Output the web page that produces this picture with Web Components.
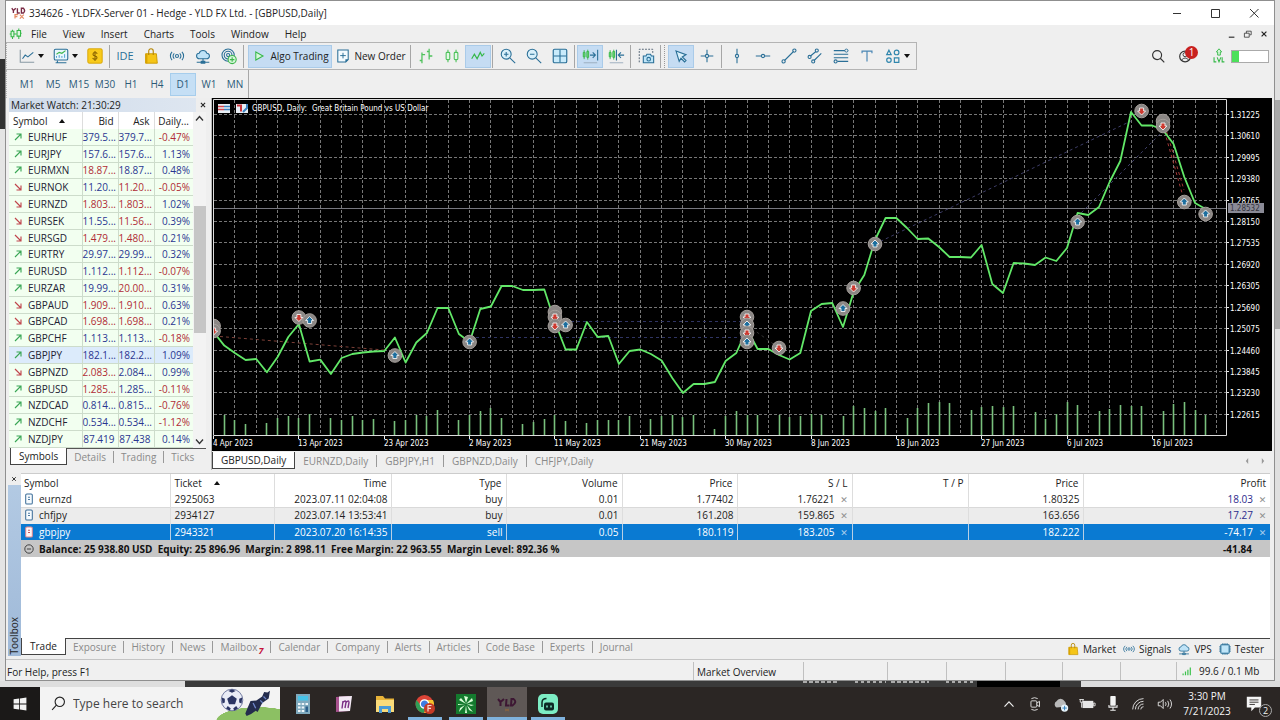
<!DOCTYPE html>
<html lang="en">
<head>
<meta charset="utf-8">
<title>334626 - YLDFX-Server 01 - Hedge - YLD FX Ltd. - [GBPUSD,Daily]</title>
<style>
html, body { margin: 0; height: 100%; }
body { font: 10px/14px "Open Sans", "Noto Sans", sans-serif; color: #222; background: #e4e4e4; }
</style>
</head>
<body>
<yld-desktop></yld-desktop>
<script>
const BASE = `*{box-sizing:border-box}
button{font:inherit;color:inherit;background:none;border:0;padding:0;margin:0;white-space:nowrap}
svg{display:block}`;

function define(name, css, html) {
  customElements.define(name, class extends HTMLElement {
    constructor() {
      super();
      this.attachShadow({ mode: 'open' });
    }
    connectedCallback() {
      const markup = typeof html === 'function' ? html(this) : html;
      this.shadowRoot.innerHTML = `<style>${BASE}${css}</style>${markup}`;
    }
  });
}

/* ---------- icons ---------- */
const B = 'stroke="#2a6f97" fill="none" stroke-width="1.2"';
const G = 'stroke="#3cb54a" fill="none" stroke-width="1.2"';
const W = 'stroke="#e8e8e8" fill="none" stroke-width="1"';
const BAG = '<path d="M4 7.5h12l1 10.5H4z" fill="#f5c518" stroke="#c99700"/><path d="M4 18V7.5h2V18z" fill="#d9a400"/><path d="M7.5 9V4.500a2.500 2.500 0 0 1 5 0V9" fill="none" stroke="#b58500" stroke-width="1.2"/>';
const CLOUD = `<path d="M6 13a3 3 0 0 1-.3-6 4.500 4.500 0 0 1 8.600 0A3 3 0 0 1 14 13z" fill="#bfe3f7" stroke="#2a6f97" stroke-width="1.2"/><path d="M10 13v3M3 17h14M8 16h4v2H8z" ${B}/>`;
const WAVES = `<circle cx="10" cy="10" r="1.700" ${B}/><path d="M7 7a4 4 0 0 0 0 6M13 7a4 4 0 0 1 0 6M4.500 5.500a6.500 6.500 0 0 0 0 9M15.500 5.500a6.500 6.500 0 0 1 0 9" ${B}/>`;
const ICONS = {
  logo: '<path d="M1 4l2 3v3M6 4L3 7M8 4v6h3M13 4h2.500q3 3 0 6H13z" fill="none" stroke="#7a2b45" stroke-width="1.700"/><path d="M5 17v-5h4M5 14.500h3M11 12l5 5M16 12l-5 5" fill="none" stroke="#e58a62" stroke-width="1.500"/>',
  candles: `<path d="M5 4v2M5 14v3M14 2v3M14 13v4M1 10h2M7 10h4M16 9h2" stroke="#35b848" stroke-width="1.500"/><path d="M3 6h4v8H3zM11.500 5h5v8h-5z" fill="#dff5e1" stroke="#35b848" stroke-width="1.500"/>`,
  line: `<path d="M2.500 3v14H18" fill="none" stroke="#8899a4" stroke-width="1.200"/><path d="M5 13l3-4 3 2 6-5" ${B}/>`,
  indicator: `<rect x="2.500" y="2.500" width="15" height="12" rx="1.500" fill="#e8f6fd" stroke="#2a6f97" stroke-width="1.200"/><path d="M5 8l3-2 3 1 4-3" ${G}/><path d="M5 12v-2M8 12V9M11 12v-2M14 12V8" stroke="#3d9ac9"/><path d="M4 17.500h12M6 15v2" ${B}/>`,
  dollar: '<rect x="2" y="2" width="16" height="16" rx="1.500" fill="#f8cb1c" stroke="#d6a300"/><path d="M12.500 7.500q-1-1.500-2.500-1.300c-3 .2-3 3.300 0 3.800s3 3.600 0 3.800q-1.700 0-2.700-1.500M10 4.500v11" fill="none" stroke="#8a6500" stroke-width="1.200"/>',
  bag: BAG, cloud: CLOUD, waves: WAVES,
  copy: `<circle cx="9" cy="9" r="6.800" ${B}/><circle cx="9" cy="9" r="4.300" ${B}/><circle cx="9" cy="9" r="1.700" ${B}/><circle cx="13.500" cy="14" r="4.500" fill="#d5f7da" stroke="#3cb54a" stroke-width="1.200"/><path d="M13.500 11.500v5M11 14h5" ${G}/>`,
  play: '<path d="M6 5l9 5-9 5z" fill="#d8f8dc" stroke="#35b848" stroke-width="1.300"/>',
  order: `<path d="M3.500 2.500h13v12l-3 3h-10z" fill="#f4fbff" stroke="#2a6f97" stroke-width="1.300"/><path d="M10 6v7M6.500 9.500h7" ${B}/><path d="M13 18l4-4h-4z" fill="#2a6f97"/>`,
  bars: '<path d="M5.500 6v12M3 15h2.500M5.500 8.500H9M13.500 2v12M11 5h2.500M13.500 10H17" fill="none" stroke="#4fc25c" stroke-width="1.400"/>',
  candle2: '<path d="M5.500 3v3M5.500 14v3M14.500 3v3M14.500 14v3" stroke="#4fc25c" stroke-width="1.200"/><rect x="3.500" y="6" width="4" height="8" rx="1" fill="#e3f8e5" stroke="#4fc25c" stroke-width="1.200"/><rect x="12.500" y="6" width="4" height="8" rx="1" fill="#e3f8e5" stroke="#4fc25c" stroke-width="1.200"/>',
  zig: '<path d="M3 13l3-5 3 5 3.500-7 2 4L17 7" fill="none" stroke="#35b848" stroke-width="1.300"/>',
  zin: `<circle cx="8" cy="8" r="5.500" fill="#d8f0fb" stroke="#2a6f97" stroke-width="1.200"/><path d="M12 12l6 6M8 5.500v5M5.500 8h5" ${B}/>`,
  zout: `<circle cx="8" cy="8" r="5.500" fill="#d8f0fb" stroke="#2a6f97" stroke-width="1.200"/><path d="M12 12l6 6M5.500 8h5" ${B}/>`,
  tile: `<rect x="2.500" y="2.500" width="15" height="15" rx="1.500" fill="#c9ebfb" stroke="#2a6f97" stroke-width="1.300"/><path d="M10 3v14M3 10h14" ${B}/>`,
  scroll: `<path d="M3.500 3.500v10M7.500 3v11" stroke="#35b848"/><path d="M2.500 6h2v5h-2zM6.500 5h2v6.500h-2z" fill="#6fd47a" stroke="#35b848"/><path d="M10 9h6M13 6l3 3-3 3M18.500 3v12" ${B}/><path d="M3 17.500h15" stroke="#9ab"/>`,
  shift: `<path d="M3.500 3.500v10M7.500 3v11" stroke="#35b848"/><path d="M2.500 6h2v5h-2zM6.500 5h2v6.500h-2z" fill="#6fd47a" stroke="#35b848"/><path d="M12.500 9H19M15.500 6l-3 3 3 3M10.500 3v12" ${B}/><path d="M3 17.500h15" stroke="#9ab"/>`,
  camera: `<path d="M2.500 17V2.500H17.500V8" stroke="#456" fill="none" stroke-dasharray="2 1.500"/><path d="M7 10h3l1-2h4l1 2h2.500v7.500H7z" fill="#bfe5f8" stroke="#2a6f97" stroke-width="1.200"/><circle cx="13" cy="13.500" r="2" ${B}/>`,
  cursor: '<path d="M4.500 4.500l11 4-4 2.500 4 4-1.500 1.500-4-4-2 3.500z" fill="#d8f0fb" stroke="#2a6f97" stroke-width="1.300"/>',
  cross: `<path d="M10 3v5M10 12v5M3 10h5M12 10h5" ${B}/><circle cx="10" cy="10" r="1.800" ${B}/>`,
  vline: `<path d="M10 2v6M10 12v6" ${B}/><circle cx="10" cy="10" r="1.800" ${B}/>`,
  hline: `<path d="M2 10h6M12 10h6" ${B}/><circle cx="10" cy="10" r="1.800" ${B}/>`,
  trend: `<path d="M5 15L15 5" ${B}/><circle cx="4" cy="16" r="1.800" ${B}/><circle cx="16" cy="4" r="1.800" ${B}/>`,
  channel: `<path d="M5 10l6-5M9 15l8-8" ${B}/><circle cx="4" cy="11" r="1.700" ${B}/><circle cx="12" cy="4" r="1.700" ${B}/><circle cx="8" cy="16" r="1.700" ${B}/>`,
  fibo: `<path d="M2 4h16M2 8h16M2 12h16M6 16h12" ${B}/><circle cx="4" cy="16" r="1.700" ${B}/><circle cx="16" cy="4" r="1.700" fill="#eee" stroke="#2a6f97"/>`,
  text: '<path d="M4.500 7V4.500h11V7M10 4.500V16" fill="none" stroke="#4a86b4" stroke-width="1.300"/>',
  shapes: '<g fill="none" stroke="#2f86ad" stroke-width="1.300"><path d="M5.500 3.500L8 8.500H3z"/><circle cx="14" cy="6" r="2.600"/><circle cx="5.500" cy="14.500" r="2.500"/><path d="M11.500 12h5v5h-5z"/></g>',
  search: '<circle cx="9" cy="9" r="5" fill="none" stroke="#333" stroke-width="1.300"/><path d="M12.500 12.500L17 17" stroke="#333" stroke-width="1.300"/>',
  user: '<circle cx="9" cy="10.500" r="6" fill="none" stroke="#333" stroke-width="1.300"/><circle cx="9" cy="8.500" r="2.300" fill="none" stroke="#333"/><path d="M5 14.500q4-4.500 8 0" fill="none" stroke="#333"/>',
  level: '<path d="M10 2l3 3.500h-1.500V9h-3V5.500H7z" fill="#d4f7d8" stroke="#35b848"/><path d="M4.500 11.500v5h2.500M8 11.500l2 5 2-5M13.500 11.500v5H16" fill="none" stroke="#35b848" stroke-width="1.200"/>',
  min: '<path d="M6 10.500h8" stroke="#333"/>',
  max: '<path d="M5.500 6.500h8v8h-8z" fill="none" stroke="#333"/>',
  close: '<path d="M5 6l8.500 8.500M13.500 6L5 14.500" stroke="#333"/>',
  smin: '<path d="M6 14h7" stroke="#333" stroke-width="1.500"/>',
  srest: '<path d="M5.500 9h6v5h-6zM8 9V6.500h6V11h-2" fill="none" stroke="#333"/>',
  sclose: '<path d="M7 7l6 6M13 7l-6 6" stroke="#222" stroke-width="1.500"/>',
  chip: `<rect x="4" y="4" width="12" height="12" rx="1" fill="#bfe5f8" stroke="#2a6f97" stroke-width="1.500"/><path d="M7 1.500v3M10 1.500v3M13 1.500v3M7 15.500v3M10 15.500v3M13 15.500v3M1.500 7h3M1.500 10h3M1.500 13h3M15.500 7h3M15.500 10h3M15.500 13h3" stroke="#2a6f97" stroke-width="1.200"/>`,
  signal: '<path d="M3.500 14v3M7.500 11v6M11.500 8v9M15.500 4v13" stroke="#3cc24c" stroke-width="2"/>',
  up: '<path d="M5 15L15 5M7.500 5H15v7.500" fill="none" stroke="#3aa655" stroke-width="1.900"/>',
  down: '<path d="M5 5l10 10M15 7.500V15H7.500" fill="none" stroke="#c0454c" stroke-width="1.900"/>',
  docb: '<rect x="4.500" y="1.500" width="11" height="17" rx="2" fill="#f6fbff" stroke="#3b6c97" stroke-width="1.700"/><path d="M8.500 7h3M8.500 11h3" stroke="#3b6c97" stroke-width="1.700"/>',
  docr: '<rect x="4.500" y="1.500" width="11" height="17" rx="2" fill="#fff6f6" stroke="#e3868b" stroke-width="1.700"/><path d="M8.500 7h3M8.500 11h3" stroke="#c04a50" stroke-width="1.700"/>',
  minus: '<circle cx="10" cy="10" r="7" fill="none" stroke="#333" stroke-width="1.500"/><path d="M6.500 10h7" stroke="#333" stroke-width="1.500"/>',
  left: '<path d="M12 5l-4 5 4 5z" fill="#999"/>',
  right: '<path d="M8 5l4 5-4 5z" fill="#999"/>',
  win: '<path d="M2 4l7-1v6.500H2zM10 3l8-1v7.500h-8zM2 10.500h7V17l-7-1zM10 10.500h8V18l-8-1z" fill="#f2f2f2"/>',
  find: '<circle cx="11.500" cy="8" r="5.500" fill="none" stroke="#222" stroke-width="1.300"/><path d="M7.500 12L2.500 17.500" stroke="#222" stroke-width="1.300"/>',
  calc: '<rect x="3" y="0" width="14" height="20" fill="#7fa9bd"/><rect x="5" y="2" width="10" height="4.500" fill="#46c3e8"/><path d="M5 9h2.500v2H5zM8.700 9h2.500v2H8.700zM5 12.500h2.500v2H5zM8.700 12.500h2.500v2H8.700zM5 16h2.500v2H5zM8.700 16h2.500v2H8.700zM12.500 9H15v2h-2.500z" fill="#eef6fa"/><path d="M12.500 12.500H15V18h-2.500z" fill="#2a5f8a"/>',
  note: '<path d="M2 3l13-1v15L2 18z" fill="#a8538f"/><path d="M5 2.500l13-.5-2 15L5 17.500z" fill="#f3e9f4"/><path d="M8 14.500L9 7M8.800 8.500q3-3 3.200 0l-1 5.500M12 8.500q3-3 3 0L14 14" fill="none" stroke="#7b2f86" stroke-width="1.400"/>',
  folder: '<path d="M1 2h7l2 2.500h9V18H1z" fill="#e8b339"/><path d="M1 6h18v12H1z" fill="#fadb7a"/><path d="M4 19v-7h12v7h-3v-4H7v4z" fill="#4a9bd6"/>',
  chrome: '<circle cx="9.500" cy="10" r="9" fill="#dc4437"/><path d="M1.500 6a9 9 0 0 0 7 13l4-7-7-1z" fill="#2f9e57"/><path d="M9.500 6H18a9 9 0 0 1-9 13l4-7z" fill="#f6c32c"/><circle cx="9.500" cy="10" r="4.200" fill="#3f7de0" stroke="#fff" stroke-width="1.200"/><circle cx="14.500" cy="14.500" r="5.500" fill="#c43a26"/><path d="M13 17.500v-6h3.500M13 14.300h3" fill="none" stroke="#f6d9d2" stroke-width="1.200"/>',
  leaf: '<path d="M0 0h20v20H0z" fill="#147a2e"/><path d="M10 9l-2-7 4 1zM10 10L3 6l2-2zM10 10l6-6 1 3zM9 11H2v-1zM11 10l7 1-3 1zM9 11l-6 7 1-4zM11 11l6 7-4-2zM10 11l1 8H9z" fill="#d9ffd9"/>',
  cam: '<rect x="0" y="0" width="20" height="20" rx="5" fill="#7dedc4"/><rect x="6" y="8.500" width="10" height="8" rx="2" fill="#0c2a25"/><path d="M4 13V8.500q0-4 4.500-4" fill="none" stroke="#0c2a25" stroke-width="1.500"/><path d="M9 11.500v2M13 11.500v2" stroke="#7dedc4" stroke-width="1.500"/>',
  yld: '<path d="M1 5l2.500 3v4M7 5L3.500 8M9.500 5L9 11.500h3.500M14.500 5h2q4 3-1 6.500h-1.500z" fill="none" stroke="#3d1733" stroke-width="2"/><path d="M8 15l4 2M12 15l-4 2" stroke="#8a6440"/>',
  chev: `<path d="M5 13l5-5.500 5 5.500" stroke="#eee" fill="none" stroke-width="1.300"/>`,
  meet: `<rect x="5.500" y="6.500" width="6.500" height="7" rx="1" ${W}/><path d="M12 9l3-2v6l-3-2M6 4q3.500-2 7 0M6 16q3.500 2 7 0" ${W}/>`,
  cloudy: '<path d="M5 14a4 4 0 0 1 0-7 5 5 0 0 1 9 0q3 3 0 6z" fill="#b9b9b9"/><circle cx="14" cy="14.500" r="4" fill="#e8f4fb"/><path d="M14 12v5M11.500 14.500h5" stroke="#2878b8"/>',
  battery: '<rect x="5" y="6.500" width="12" height="8" fill="#e6e6e6"/><path d="M17 9h2v3h-2zM1.500 5h5M2.500 5v3h3V5M4 8v6" stroke="#e6e6e6" fill="none"/>',
  mic: '<rect x="7" y="1" width="6" height="11" rx="1" fill="#f4f4f4"/><path d="M5.500 11v2.500h9V11M10 13v4M7 17h6" stroke="#eee" stroke-width="1.200" fill="none"/>',
  wifi: `<path d="M3 16A12 12 0 0 1 15 4M6 16a9 9 0 0 1 9-9M9 16a6 6 0 0 1 6-6M12 16a3 3 0 0 1 3-3" ${W}/>`,
  vol: `<path d="M2.500 8h2.500l3-3v10l-3-3H2.500zM10.500 8q1.500 2 0 4M13 6.500q2.500 3.500 0 7M15.500 5q3.500 5 0 10" ${W}/>`,
  msg: '<path d="M2 2h16v12h-7l-4 4v-4H2z" fill="#f4f4f4"/><path d="M5 5.500h10M5 8h10M5 10.500h6" stroke="#2b2725"/>',
  ball: '<circle cx="10" cy="10" r="9" fill="#e9ecf6" stroke="#5a6490" stroke-width=".7"/><path d="M10 6l4 3-1.500 4.500h-5L6 9zM10 1l3 1.500L10 4 7 2.500zM1.500 8l2.500 1v3l-2 1zM18.500 8L16 9v3l2 1zM5 17l1.500-2 2.500 2-1 2zM15 17l-1.500-2-2.500 2 1 2z" fill="#2b3563"/>',
  boot: '<path d="M1 18L5 8.500l4.500-.5L14 5l1.500-3.500L18 2l2-1.500-1 6-5 3.500-3.500 7-1.500-1-3.500 2.500L2 20z" fill="#242c4d"/><path d="M7 10l2 4M15 5l2 2M12.500 8l2 2" stroke="#6f86c9" fill="none"/>'
};
define('yld-icon', `:host{display:block;flex:none;width:20px;height:20px}svg{width:100%;height:100%}`,
  el => `<svg viewBox="0 0 20 20" aria-hidden="true">${ICONS[el.getAttribute('name')]}</svg>`);

/* ---------- toolbar parts ---------- */
define('tool-button', `
:host{display:block;flex:none;height:23px;color:#2a4a5e}
button{display:flex;align-items:center;justify-content:center;width:26px;height:23px}
::slotted(yld-icon){width:18px;height:18px}
:host([drop]) button{width:34px;justify-content:flex-start;padding-left:4px}
:host([wide]) button{width:100%;padding:0 2px;gap:3px;color:#222}
:host([wide]) ::slotted(yld-icon){width:16px;height:16px}
:host([on]) button{background:#c5dcf3;border:1px solid #aacbe9}
i{border:3px solid transparent;border-top:4px solid #111;border-bottom:0;margin-left:2px}`,
  el => `<button type="button" aria-label="${el.getAttribute('label') || ''}"><slot></slot>${el.hasAttribute('drop') ? '<i></i>' : ''}</button>`);

define('tool-sep', `:host{display:block;flex:none;width:4px;height:23px}
:host([grip]){width:9px}
i{display:block;height:23px;margin-left:1px;border-left:1px solid #a6a6a6}
:host([grip]) i{border-right:1px dotted #999;width:5px}`,
  () => '<i></i>');

const tb = (icon, label, extra = '') => `<tool-button label="${label}" ${extra}><yld-icon name="${icon}"></yld-icon></tool-button>`;
define('yld-toolbar', `
:host{display:flex;justify-content:space-between;height:28px}
.tools{display:flex;align-items:center;border:1px solid #b4b4b4;border-left:1px dotted #b4b4b4;padding:0 2px 0 7px}
.algo{width:84px;margin-left:2px}.new{width:77px}
.ide{font-size:11px;color:#2a6f97}
.right{display:flex;align-items:center;padding-right:5px}
.user{position:relative;margin-left:10px;padding-right:2px}
.badge{position:absolute;right:-1px;top:-1px;width:13px;height:13px;border-radius:50%;background:#c8201f;color:#fff;text-align:center;line-height:13px}
.level{margin:0 3px 0 13px}
.meter{width:38px;height:13px;border:1px solid #aaa;background:#fff}
.meter span{display:block;width:20%;height:11px;background:#4be05a}
.right yld-icon{width:18px;height:18px}
button{display:block}`,
`<div class="tools">
${tb('line', 'Line studies', 'drop')}${tb('indicator', 'Indicators', 'drop')}${tb('dollar', 'Deposit')}<tool-sep></tool-sep>
<tool-button label="IDE"><span class="ide">IDE</span></tool-button>${tb('bag', 'Market')}${tb('waves', 'Signals')}${tb('cloud', 'VPS')}${tb('copy', 'Copy')}<tool-sep></tool-sep>
<tool-button class="algo" wide on label="Algo Trading"><yld-icon name="play"></yld-icon>Algo Trading</tool-button><tool-button class="new" wide label="New Order"><yld-icon name="order"></yld-icon>New Order</tool-button><tool-sep></tool-sep>
${tb('bars', 'Bar chart')}${tb('candle2', 'Candlesticks')}${tb('zig', 'Line chart', 'on')}<tool-sep></tool-sep>
${tb('zin', 'Zoom in')}${tb('zout', 'Zoom out')}${tb('tile', 'Tile windows')}<tool-sep></tool-sep>
${tb('scroll', 'Auto scroll', 'on')}${tb('shift', 'Chart shift')}<tool-sep></tool-sep>${tb('camera', 'Screenshot')}<tool-sep grip></tool-sep>
${tb('cursor', 'Cursor', 'on')}${tb('cross', 'Crosshair')}<tool-sep></tool-sep>
${tb('vline', 'Vertical line')}${tb('hline', 'Horizontal line')}${tb('trend', 'Trendline')}${tb('channel', 'Channel')}${tb('fibo', 'Fibonacci')}${tb('text', 'Text')}${tb('shapes', 'Objects', 'drop')}
</div>
<div class="right"><button type="button" aria-label="Search"><yld-icon name="search"></yld-icon></button>
<button type="button" class="user" aria-label="Account"><yld-icon name="user"></yld-icon><span class="badge">1</span></button>
<yld-icon class="level" name="level"></yld-icon><div class="meter" role="meter" aria-label="Level" aria-valuemin="0" aria-valuemax="100" aria-valuenow="20"><span></span></div></div>`);

define('yld-timeframes', `
:host{display:block;height:28px}
div{display:inline-flex;align-items:center;height:28px;padding:0 0 0 7px;border-right:1px solid #a8a8a8;border-left:1px dotted #b4b4b4}
button{width:26px;height:23px;color:#2c5a78}
button[aria-pressed=true]{background:#c5dff5;border:1px solid #a6cdec}`,
`<div>${['M1','M5','M15','M30','H1','H4','D1','W1','MN'].map(t => `<button type="button" aria-pressed="${t === 'D1'}">${t}</button>`).join('')}</div>`);

/* ---------- title bar and menu ---------- */
define('yld-titlebar', `
:host{display:flex;align-items:center;height:24px;background:#fff;padding:0 0 0 5px}
h1{flex:1;font:inherit;margin:0 0 0 2px}yld-icon.logo{width:16px;height:16px}
button{width:39px;display:flex;justify-content:center}`,
`<yld-icon class="logo" name="logo"></yld-icon><h1><slot></slot></h1>
<button type="button" aria-label="Minimize"><yld-icon name="min"></yld-icon></button><button type="button" aria-label="Maximize"><yld-icon name="max"></yld-icon></button><button type="button" aria-label="Close"><yld-icon name="close"></yld-icon></button>`);

define('yld-menu', `
:host{display:flex;align-items:center;height:17px;padding:0 2px 0 3px}
nav{flex:1;display:flex}nav button{padding:0 8px}
yld-icon.m{width:14px;height:14px}
.w{display:flex}.w yld-icon{width:16px;height:16px}`,
`<yld-icon class="m" name="candles"></yld-icon><nav>${['File','View','Insert','Charts','Tools','Window','Help'].map(t => `<button type="button">${t}</button>`).join('')}</nav>
<div class="w"><button type="button" aria-label="Minimize chart"><yld-icon name="smin"></yld-icon></button><button type="button" aria-label="Restore chart"><yld-icon name="srest"></yld-icon></button><button type="button" aria-label="Close chart"><yld-icon name="sclose"></yld-icon></button></div>`);

/* ---------- tab strip: tabs="A|B|C", the first one is open ---------- */
define('tab-strip', `
:host{display:flex;height:17px;border-top:1px solid #555;color:#8a8a8a}
button{padding:0 var(--tab-pad,7px);height:12px;line-height:12px;margin-top:2px;border-left:1px solid #999}
button:first-of-type{background:#fff;color:#222;border:1px solid #444;border-top:0;height:17px;line-height:17px;margin-top:-1px;padding:0 var(--first-pad,8px)}
button:nth-of-type(2){border-left:0}
sub{font:italic bold 9px/9px "Open Sans",sans-serif;color:#c5123a;margin-left:1px}`,
  el => el.getAttribute('tabs').split('|').map((t, i) => `<button type="button" role="tab" aria-selected="${!i}">${t.replace(/(\d)$/, (m, d) => t.startsWith('Mailbox') ? `<sub>${d}</sub>` : d)}</button>`).join(''));

/* ---------- market watch ---------- */
/* symbol, direction, bid, ask, daily change, tone of bid and of ask */
const QUOTES = `EURHUF u 379.5... 379.7... -0.47% bb
EURJPY u 157.6... 157.6... 1.13% bb
EURMXN u 18.87... 18.87... 0.48% rb
EURNOK d 11.20... 11.20... -0.05% br
EURNZD d 1.803... 1.803... 1.02% rr
EURSEK d 11.55... 11.56... 0.39% br
EURSGD d 1.479... 1.480... 0.21% rr
EURTRY u 29.97... 29.99... 0.32% bb
EURUSD u 1.112... 1.112... -0.07% br
EURZAR u 19.99... 20.00... 0.31% br
GBPAUD d 1.909... 1.910... 0.63% rr
GBPCAD d 1.698... 1.698... 0.21% rr
GBPCHF u 1.113... 1.113... -0.18% bb
GBPJPY u 182.1... 182.2... 1.09% bb
GBPNZD d 2.083... 2.084... 0.99% rb
GBPUSD u 1.285... 1.285... -0.11% rb
NZDCAD u 0.814... 0.815... -0.76% bb
NZDCHF u 0.534... 0.534... -1.12% bb
NZDJPY u 87.419 87.438 0.14% bb`.split('\n').map(r => r.split(' '));

define('market-watch', `
:host{display:flex;flex-direction:column;border-right:1px solid #b8b8b8;padding:0 5px 5px 3px}
header{display:flex;justify-content:space-between;align-items:center;height:14px;padding-left:2px;margin-right:-4px;background:linear-gradient(90deg,#cfdbea,#dfe7f1)}
h2{font:inherit;margin:0}
header button{width:14px;height:14px;background:#eee}header yld-icon{width:14px;height:14px}
.body{flex:1;display:flex;min-height:0;background:#fff}
table{height:100%;border-collapse:collapse;table-layout:fixed;width:184px}
.wrap{flex:1}
th{font-weight:400;height:17px;text-align:right;padding:0 4px;border-right:1px solid #ddd}th:first-child{text-align:left}
th:last-child{border:0;padding:0 4px 0 0}
td{padding:0 3px 0 0;text-align:right;background:#f2fff0;border:1px solid #cddccb;border-width:0 1px 1px 0;white-space:nowrap;line-height:14px}
td:first-child{text-align:left;color:#223}td:last-child{border-right:0}
td span{display:flex;align-items:center;gap:4px;padding-left:3px}td yld-icon{width:12px;height:12px}
tr.sel td{background:#dcebfb}
.b{color:#2a3690}.r{color:#b02c35}
i{display:inline-block;border:3px solid transparent;border-bottom:4px solid #111;border-top:0;margin:0 0 2px 12px}
.bar{width:13px;background:#f3f3f3;display:flex;flex-direction:column;align-items:center;padding:2px 0}
.thumb{width:12px;height:127px;margin-top:83px;background:#c6c6c6}
.bar svg{width:9px;height:9px;flex:none}.bar svg:last-child{margin-top:auto}
tab-strip{margin-left:1px;--tab-pad:7px}`,
`<header><h2>Market Watch: 21:30:29</h2><button type="button" aria-label="Close Market Watch"><yld-icon name="sclose"></yld-icon></button></header>
<div class="body"><div class="wrap"><table><colgroup><col style="width:73px"><col style="width:36px"><col style="width:36px"><col style="width:39px"></colgroup>
<thead><tr><th>Symbol<i></i></th><th>Bid</th><th>Ask</th><th>Daily...</th></tr></thead><tbody>
${QUOTES.map(([s, d, b, a, c, t]) => `<tr${s === 'GBPJPY' ? ' class="sel"' : ''}><td><span><yld-icon name="${d === 'u' ? 'up' : 'down'}"></yld-icon>${s}</span></td><td class="${t[0]}">${b}</td><td class="${t[1]}">${a}</td><td class="${c[0] === '-' ? 'r' : 'b'}">${c}</td></tr>`).join('')}
</tbody></table></div><div class="bar"><svg viewBox="0 0 9 9"><path d="M1 6.500l3.500-4L8 6.500" fill="none" stroke="#333" stroke-width="1.300"/></svg><div class="thumb"></div><svg viewBox="0 0 9 9"><path d="M1 2.500l3.500 4L8 2.500" fill="none" stroke="#333" stroke-width="1.300"/></svg></div></div>
<tab-strip tabs="Symbols|Details|Trading|Ticks"></tab-strip>`);

/* ---------- price chart ---------- */
const X0 = 213.6, STEP = 10.667;
const px = i => +(X0 + i * STEP).toFixed(1);
const CLOSE = [332,345.6,353,360,359,372.3,357,337,324,361.5,359.6,374,358,354,352.5,351.5,351,337.5,362.5,342.5,333,308,308,334,342,309,306.5,286,286,290,290,289.5,322,349.5,349.5,322,337,336,364,351,349.5,354,360.5,378,393,384,384,382,361,353,329,349,349,355,359.5,353,311,304,303,327,292,275,240,218,218,228,239,238.5,247,257,257,257.5,245,284,293,263,263.5,265,257.5,261,248,213,215,207,182,161,112,125.5,125.5,130,144,177,203,209];
const VOLUME = {1:415,2:420,3:424,5:423,6:418,7:416,8:418,9:414,11:418,12:420,13:416,14:420,15:419,17:421,18:420,19:415,20:416,21:410,23:420,24:415,25:411,26:408,27:418,29:424,30:422,31:419,32:415,33:421,35:423,36:420,37:420,38:420,39:416,41:419,42:416,43:415,44:417,45:415,47:429,48:416,49:411,50:415,51:415,53:415,54:417,55:416,56:414,57:415,59:416,60:406,61:408,62:411,63:408,65:418,66:408,67:403,68:402,69:403,71:410,72:407,73:406,74:407,75:406,77:412,78:419,79:414,80:402,81:405,83:411,84:409,85:405,86:406,87:406,89:411,90:404,91:402,92:410,93:415};
const MARKS = [[0,326,'g'],[0,331,'r'],[8,317.5,'r'],[9,320.5,'b'],[17,355.5,'b'],[24,342,'b'],[32,312,'g'],[32,317,'r'],[32,326,'r'],[33,325,'b'],[50,317,'r'],[50,325,'b'],[50,333,'r'],[50,342,'b'],[53,348,'r'],[59,308.5,'b'],[60,288,'r'],[62,244,'b'],[81,222,'b'],[87,111,'r'],[89,121,'g'],[89,126,'r'],[91,202,'b'],[93,214,'b']];
const PRICES = ['1.31225','1.30610','1.29995','1.29380','1.28765','1.28150','1.27535','1.26920','1.26305','1.25690','1.25075','1.24460','1.23845','1.23230','1.22615'];
const DATES = ['4 Apr 2023','13 Apr 2023','23 Apr 2023','2 May 2023','11 May 2023','21 May 2023','30 May 2023','8 Jun 2023','18 Jun 2023','27 Jun 2023','6 Jul 2023','16 Jul 2023'];
const py = k => 114 + Math.round(k * 21.41);
const arrow = (x, y, t) => {
  const up = `M0-4l4 4H2v3H-2V0H-4z`;
  return `<g transform="translate(${x} ${y})"><circle r="6.800" fill="#8b8785" stroke="#a6a09c"/>${t === 'g' ? '' : `<path d="${up}" transform="${t === 'r' ? 'rotate(180)' : ''}" fill="${t === 'r' ? '#cc3a30' : '#1c6e9e'}" stroke="#f3f3f3" stroke-width=".9"/>`}</g>`;
};
define('price-chart', `
:host{display:block;background:#000}
svg{width:100%;height:auto}
text{font:8px "DejaVu Sans Condensed","DejaVu Sans",sans-serif;fill:#fff}
.g{stroke:#8c8c8c;stroke-width:1;stroke-dasharray:3 2;opacity:.85}
.t{stroke-dasharray:3 3;fill:none}`,
() => {
  let s = '<svg viewBox="212 98 1060 353" role="img" aria-label="GBPUSD daily line chart"><defs><clipPath id="plot"><path d="M214 100h1012v335H214z"/></clipPath></defs><rect x="212" y="98" width="1060" height="353" fill="#000"/>';
  for (let k = 1; k <= 47; k++) { const x = Math.floor(px(2 * k)) + .5; s += `<path class="g" d="M${x} 100V435"/>`; }
  PRICES.forEach((p, k) => { const y = py(k) + .5; s += `<path class="g" d="M214 ${y}H1226"/><path d="M1226 ${y}h3" stroke="#eee"/><text x="1230" y="${y + 3}">${p}</text>`; });
  s += '<path d="M214 208.500h1012" stroke="#77777f"/>';
  for (const i in VOLUME) s += `<path d="M${Math.floor(px(+i)) + .5} ${VOLUME[i]}V435" stroke="#78c07c" stroke-width="1.600"/>`;
  s += '<g class="t"><path d="M214 336L384 350" stroke="#7d4038"/><path d="M470 337.500H747M565 321.500H747" stroke="#2f3463"/><path d="M747 325L779 348" stroke="#333"/><path d="M875 244L1131 121M1077 217L1163 131" stroke="#3c3c66"/><path d="M1163 126L1184 200M1165 126L1184 190" stroke="#a33838"/></g>';
  s += `<g clip-path="url(#plot)"><polyline fill="none" stroke="#62e868" stroke-width="1.800" stroke-linejoin="round" points="${CLOSE.map((y, i) => px(i) + ',' + y).join(' ')}"/>${MARKS.map(([i, y, t]) => arrow(px(i), y, t)).join('')}</g>`;
  s += '<path d="M213.500 435.500V99.500H1226.500V435.500z" fill="none" stroke="#dcdcdc"/>';
  DATES.forEach((d, k) => { s += `<path d="M${Math.floor(px(8 * k)) + .5} 436v3" stroke="#eee"/><text x="${Math.floor(px(8 * k))}" y="446">${d}</text>`; });
  s += '<rect x="1228" y="203" width="36" height="10" fill="#8a8a96"/><text x="1230" y="211" style="fill:#33333d">1.28532</text>';
  s += '<g><rect x="218" y="104" width="12" height="9" fill="#e8eef5"/><path d="M218 106.500h6M218 109.500h6" stroke="#d3474d" stroke-width="1.500"/><path d="M224 106.500h6M224 109.500h6" stroke="#3b82c0" stroke-width="1.500"/><rect x="236" y="104" width="12" height="9" fill="#e8eef5"/><path d="M237 105.500h4v6" fill="none" stroke="#c9353c" stroke-width="2"/><path d="M243 112l4-4V104" fill="none" stroke="#3b82c0" stroke-width="2"/></g>';
  return s + '<text x="252" y="111">GBPUSD, Daily:</text><text x="312" y="111">Great Britain Pound vs US Dollar</text></svg>';
});

define('chart-area', `
:host{display:block;min-width:0}
.row{display:flex;justify-content:space-between;align-items:flex-start;padding-top:2px}
tab-strip{flex:1;--tab-pad:8px;--first-pad:8px;border-top:0}
.nav{display:flex;gap:4px;padding:2px 3px 0 0}.nav yld-icon{width:12px;height:12px}`,
`<slot></slot><div class="row"><tab-strip tabs="GBPUSD,Daily|EURNZD,Daily|GBPJPY,H1|GBPNZD,Daily|CHFJPY,Daily"></tab-strip><div class="nav"><button type="button" aria-label="Previous tab"><yld-icon name="left"></yld-icon></button><button type="button" aria-label="Next tab"><yld-icon name="right"></yld-icon></button></div></div>`);

/* ---------- toolbox ---------- */
const X = '<button type="button" class="x" aria-label="Close position">✕</button>';
const TRADES = [
  ['eurnzd','2925063','2023.07.11 02:04:08','buy','0.01','1.77402','1.76221','1.80325','18.03','docb'],
  ['chfjpy','2934127','2023.07.14 13:53:41','buy','0.01','161.208','159.865','163.656','17.27','docb'],
  ['gbpjpy','2943321','2023.07.20 16:14:35','sell','0.05','180.119','183.205','182.222','-74.17','docr']
];
define('trade-toolbox', `
:host{display:flex;flex:1;padding:0 4px 3px 2px}
aside{width:13px;flex:none;display:flex;flex-direction:column;background:linear-gradient(#b4cbe4,#9fb9d8)}
aside button{background:#eee;height:12px;width:13px}aside button yld-icon{width:12px;height:12px}
aside h2{font:inherit;margin:auto 0 0;writing-mode:vertical-rl;transform:rotate(180deg);line-height:13px;padding-top:2px}
.main{flex:1;display:flex;flex-direction:column;min-width:0}
.sheet{flex:1;background:#fff;border-top:1px solid #ccc}
table{width:100%;height:83px;border-collapse:collapse;table-layout:fixed}
th,td{font-weight:400;text-align:right;padding:0 3px 0 0;line-height:14px;white-space:nowrap;border-right:1px solid #ddd}
th{height:17px;padding-right:4px}
th:last-child,tbody td:last-child{border-right:0}
th:nth-child(-n+2),tbody td:nth-child(-n+2){text-align:left;padding-left:4px}
th:first-child{padding-left:3px}
td span{display:flex;align-items:center;gap:4px}tbody td:first-child{padding-left:2px}td yld-icon{width:12px;height:12px}
tbody tr:nth-child(2) td{background:#ececec;box-shadow:inset 0 1px #d9d9d9}
tbody tr.sel td{background:#0a7ad2;color:#fff;border-color:#b9cfe4}
td.p{color:#2d2b8c}
.x{font:9px/10px "DejaVu Sans",sans-serif;color:#8f8f8f;margin-left:5px;width:9px}
tr.sel .x{color:#a9cdec}
tfoot td{height:17px;background:#c6c6c6;font-weight:700;border:0;color:#111}
tfoot td:first-child{padding-left:2px}
tfoot td:last-child{padding-right:18px}
.a{display:inline-block;border:3px solid transparent;border-bottom:4px solid #111;border-top:0;margin:0 0 2px 12px}
.foot{display:flex;justify-content:space-between;border-top:1px solid #444}
tab-strip{border-top:0;--tab-pad:7px;--first-pad:8px}
.links{display:flex;gap:6px;padding:3px 6px 0 0}.links a{display:flex;align-items:center;gap:3px;color:#222;text-decoration:none}.links yld-icon{width:14px;height:14px}`,
`<aside><button type="button" aria-label="Close Toolbox"><yld-icon name="sclose"></yld-icon></button><h2>Toolbox</h2></aside>
<div class="main"><div class="sheet"><table><colgroup><col style="width:149px"><col style="width:104px"><col style="width:117px"><col style="width:115px"><col style="width:116px"><col style="width:115px"><col style="width:115px"><col style="width:116px"><col style="width:115px"><col></colgroup>
<thead><tr><th>Symbol</th><th>Ticket<i class="a"></i></th><th>Time</th><th>Type</th><th>Volume</th><th>Price</th><th>S / L</th><th>T / P</th><th>Price</th><th>Profit</th></tr></thead>
<tbody>${TRADES.map((t, i) => `<tr${i === 2 ? ' class="sel"' : ''}><td><span><yld-icon name="${t[9]}"></yld-icon>${t[0]}</span></td><td>${t[1]}</td><td>${t[2]}</td><td>${t[3]}</td><td>${t[4]}</td><td>${t[5]}</td><td>${t[6]}${X}</td><td></td><td>${t[7]}</td><td${i < 2 ? ' class="p"' : ''}>${t[8]}${X}</td></tr>`).join('')}</tbody>
<tfoot><tr><td colspan="8"><span><yld-icon name="minus"></yld-icon>Balance: 25 938.80 USD&nbsp; Equity: 25 896.96&nbsp; Margin: 2 898.11&nbsp; Free Margin: 22 963.55&nbsp; Margin Level: 892.36 %</span></td><td colspan="2">-41.84</td></tr></tfoot></table></div>
<div class="foot"><tab-strip tabs="Trade|Exposure|History|News|Mailbox7|Calendar|Company|Alerts|Articles|Code Base|Experts|Journal"></tab-strip>
<div class="links"><a href="#market"><yld-icon name="bag"></yld-icon>Market</a><a href="#signals"><yld-icon name="waves"></yld-icon>Signals</a><a href="#vps"><yld-icon name="cloud"></yld-icon>VPS</a><a href="#tester"><yld-icon name="chip"></yld-icon>Tester</a></div></div></div>`);

define('status-bar', `
:host{display:flex;align-items:flex-end;height:21px;border-top:1px solid #c4c4c4;background:#f0f0f0}
div{height:18px;line-height:20px;border-left:1px solid #c0c0c0;padding-left:3px}
.help{flex:1;border:0;padding-left:1px}
.net{display:flex;align-items:center;gap:6px;width:98px;padding-left:4px}.net yld-icon{width:12px;height:12px}`,
`<div class="help">For Help, press F1</div><div style="width:110px">Market Overview</div><div style="width:84px"></div><div style="width:59px"></div><div style="width:59px"></div><div style="width:57px"></div><div style="width:58px"></div><div style="width:56px"></div><div class="net"><yld-icon name="signal"></yld-icon>99.6 / 0.1 Mb</div>`);

/* ---------- taskbar ---------- */
define('task-bar', `
:host{display:flex;height:33px;background:#2b2624;color:#f4f4f4;align-items:stretch}
button{display:flex;align-items:center;justify-content:center;flex:none}
.start{width:40px;background:#1b1918}.start yld-icon{width:16px;height:16px}
form{display:flex;align-items:center;width:240px;background:#f3f3f3;gap:6px;padding-left:10px;margin:0;overflow:hidden;background-image:radial-gradient(ellipse 42px 14px at 218px 34px,#8cc063 98%,transparent)}
form yld-icon.f{width:17px;height:17px}
input{flex:1;min-width:0;border:0;background:none;font:12px "Open Sans",sans-serif;padding:0;outline:0}
input::placeholder{color:#444;opacity:1}
.art{display:flex;padding:0 10px 3px 0}.art .boot{width:26px;height:26px;margin-top:2px}
.art .ball{width:24px;height:24px}
.apps{display:flex;flex:1;padding-left:2px}
.apps button{width:41px}
.apps button:nth-child(n+4){margin-right:1px;width:40px}
.apps button.run{background:linear-gradient(#7fb2dd,#7fb2dd) center bottom/34px 3px no-repeat}
.apps button.act{background:linear-gradient(#7fb2dd,#7fb2dd) center bottom/100% 3px no-repeat,#5f5856}
.tray{display:flex;align-items:center}.tray button{width:26px}.tray yld-icon{width:18px;height:18px}
.clock{text-align:center;width:58px;line-height:15px}
.note{position:relative;width:36px;display:flex;justify-content:center;margin-right:8px}
.note span{position:absolute;right:0;bottom:-4px;width:13px;height:13px;border-radius:50%;background:#2b2725;border:1px solid #aaa;line-height:11px;text-align:center;font-size:9px}`,
`<button type="button" class="start" aria-label="Start"><yld-icon name="win"></yld-icon></button>
<form><yld-icon class="f" name="find"></yld-icon><input type="text" aria-label="Search" placeholder="Type here to search"><div class="art"><yld-icon class="ball" name="ball"></yld-icon><yld-icon class="boot" name="boot"></yld-icon></div></form>
<div class="apps">${[['calc',''],['note',''],['folder',''],['chrome','run'],['leaf','run'],['yld','run act'],['cam','run']].map(([n, c]) => `<button type="button" class="${c}" aria-label="${n}"><yld-icon name="${n}"></yld-icon></button>`).join('')}</div>
<div class="tray">${['chev','meet','cloudy','battery','mic','wifi','vol'].map(n => `<button type="button" aria-label="${n}"><yld-icon name="${n}"></yld-icon></button>`).join('')}
<div class="clock">3:30 PM<br>7/21/2023</div><div class="note"><yld-icon name="msg"></yld-icon><span>2</span></div></div>`);

/* ---------- desktop ---------- */
define('yld-desktop', `
:host{display:flex;flex-direction:column;min-height:100vh}
.back{flex:1;display:flex;flex-direction:column;padding:0 5px;background:linear-gradient(#dcdcdc 59px,#333 59px,#333 129px,#e4e4e4 129px) left/5px 100% no-repeat,linear-gradient(#e0e0e0 100px,#a8a8a8 100px,#a8a8a8 329px,#e0e0e0 329px) right/5px 100% no-repeat}
.window{flex:1;display:flex;flex-direction:column;background:#efefef;border:1px solid #8f8f8f}
.work{display:grid;grid-template-columns:206px 1fr;padding-right:2px;margin-bottom:3px}
.under{height:6px;margin:0 -5px;background:
 repeating-linear-gradient(90deg,#aaa 0 4px,transparent 4px 6px) 803px 0/34px 2px no-repeat,
 repeating-linear-gradient(90deg,#aaa 0 3px,transparent 3px 6px) 855px 0/31px 2px no-repeat,
 repeating-linear-gradient(90deg,#aaa 0 4px,transparent 4px 6px) 891px 0/38px 2px no-repeat,
 repeating-linear-gradient(90deg,#aaa 0 3px,transparent 3px 6px) 946px 0/27px 2px no-repeat,
 linear-gradient(90deg,#dedede 185px,#3a3a3a 185px,#3a3a3a 977px,#000 977px,#000 1060px,#3a3a3a 1060px,#3a3a3a 1081px,#dcdcdc 1081px)}`,
`<div class="back"><div class="window">
<yld-titlebar>334626 - YLDFX-Server 01 - Hedge - YLD FX Ltd. - [GBPUSD,Daily]</yld-titlebar>
<yld-menu></yld-menu><yld-toolbar></yld-toolbar><yld-timeframes></yld-timeframes>
<div class="work"><market-watch></market-watch><chart-area><price-chart></price-chart></chart-area></div>
<trade-toolbox></trade-toolbox><status-bar></status-bar></div>
<div class="under"></div></div>
<task-bar></task-bar>`);
</script>
</body>
</html>
